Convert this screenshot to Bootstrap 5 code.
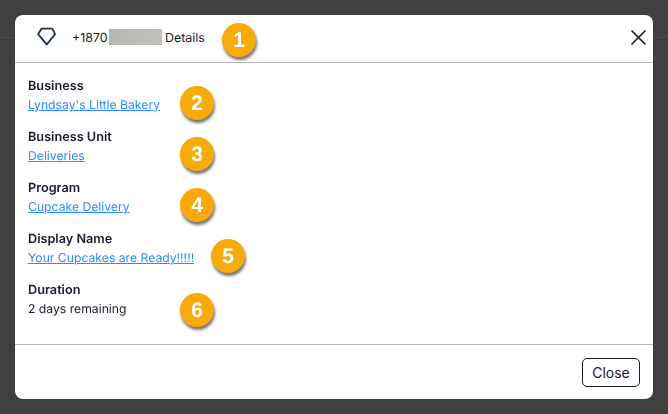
<!DOCTYPE html>
<html lang="en">
<head>
    <meta charset="UTF-8">
    <meta name="viewport" content="width=device-width, initial-scale=1.0">
    <title>Details</title>
    <link rel="stylesheet" href="https://cdn.jsdelivr.net/npm/bootstrap@5.3.0/dist/css/bootstrap.min.css">
    <style>
        html, body { height: 100%; overflow: hidden; }
        body { background: #3f3f3f; font-family: Inter, "Liberation Sans", sans-serif; font-size: 12.2px; color: #1a1a2a; text-rendering: geometricPrecision; }
        .page-strip { height: 38px; border-bottom: 1px solid #4c4c4c; background: #404040; }
        .overlay-wrap { position: fixed; inset: 0; padding: 15px; }
        .detail-modal { height: 384px; border: 0; border-radius: 8px; position: relative; background: #fff; }
        .detail-head { height: 48px; padding: 0 7px 0 22px; border-bottom: 1px solid #b9b8c3; }
        .detail-head svg { margin-bottom: 3px; }
        .detail-head .phone { margin-left: 15px; font-size: 12.4px; }
        .masked { display: inline-block; width: 53px; height: 16px; background: linear-gradient(90deg, #b6b6b3, #c0c0bd); margin-left: 1px; vertical-align: -3px; }
        .detail-body { height: 281px; padding: 15px 13px 0; }
        .detail-item { height: 51px; line-height: 19px; }
        .detail-item strong { display: block; font-weight: 600; font-size: 12.7px; line-height: 17px; }
        .detail-item a { color: #2a8cff; }
        .detail-foot { height: 55px; padding: 0 13px 0 0; border-top: 1px solid #b9b8c3; }
        .btn-shut { width: 58px; height: 29px; padding: 0; font-size: 14px; color: #1a1a2a; border: 1px solid #1a1a2a; border-radius: 5px; background: #fff; }
        .step-dot { position: absolute; width: 34px; height: 34px; padding-top: 2px; border-radius: 50%; background: #f7ab0b; color: #fff; font-family: "Liberation Sans", sans-serif; font-size: 21px; font-weight: 700; box-shadow: 1px 3px 3px rgba(0,0,0,.55); }
    </style>
</head>
<body>

<div class="page-strip"></div>

<div class="overlay-wrap">
    <div class="modal-content detail-modal">
        <div class="modal-header detail-head d-flex align-items-center justify-content-between">
            <div class="d-flex align-items-center">
                <svg width="20" height="20" viewBox="0 0 20 20" fill="none" stroke="#1d2f5c" stroke-width="1.8" stroke-linejoin="round"><path d="M4.5 1.7h11L18 7.2l-8.2 10.2L1 7.2z"/></svg>
                <span class="phone">+1870<span class="masked"></span> Details</span>
            </div>
            <svg width="15" height="15" viewBox="0 0 15 15" stroke="#1a1a2a" stroke-width="1.7" stroke-linecap="round"><path d="M1 1l13 13M14 1L1 14"/></svg>
        </div>
        <div class="modal-body detail-body">
            <div class="detail-item"><strong>Business</strong><a href="#">Lyndsay's Little Bakery</a></div>
            <div class="detail-item"><strong>Business Unit</strong><a href="#">Deliveries</a></div>
            <div class="detail-item"><strong>Program</strong><a href="#">Cupcake Delivery</a></div>
            <div class="detail-item"><strong>Display Name</strong><a href="#">Your Cupcakes are Ready!!!!!</a></div>
            <div class="detail-item"><strong>Duration</strong>2 days remaining</div>
        </div>
        <div class="modal-footer detail-foot d-flex align-items-center justify-content-end">
            <button type="button" class="btn btn-shut">Close</button>
        </div>
        <div class="step-dot d-flex align-items-center justify-content-center" style="left:207px;top:8px">1</div>
        <div class="step-dot d-flex align-items-center justify-content-center" style="left:165px;top:71px">2</div>
        <div class="step-dot d-flex align-items-center justify-content-center" style="left:165px;top:122px">3</div>
        <div class="step-dot d-flex align-items-center justify-content-center" style="left:165px;top:173px">4</div>
        <div class="step-dot d-flex align-items-center justify-content-center" style="left:196px;top:224px">5</div>
        <div class="step-dot d-flex align-items-center justify-content-center" style="left:165px;top:278px">6</div>
    </div>
</div>

<script src="https://cdn.jsdelivr.net/npm/bootstrap@5.3.0/dist/js/bootstrap.bundle.min.js"></script>
</body>
</html>
